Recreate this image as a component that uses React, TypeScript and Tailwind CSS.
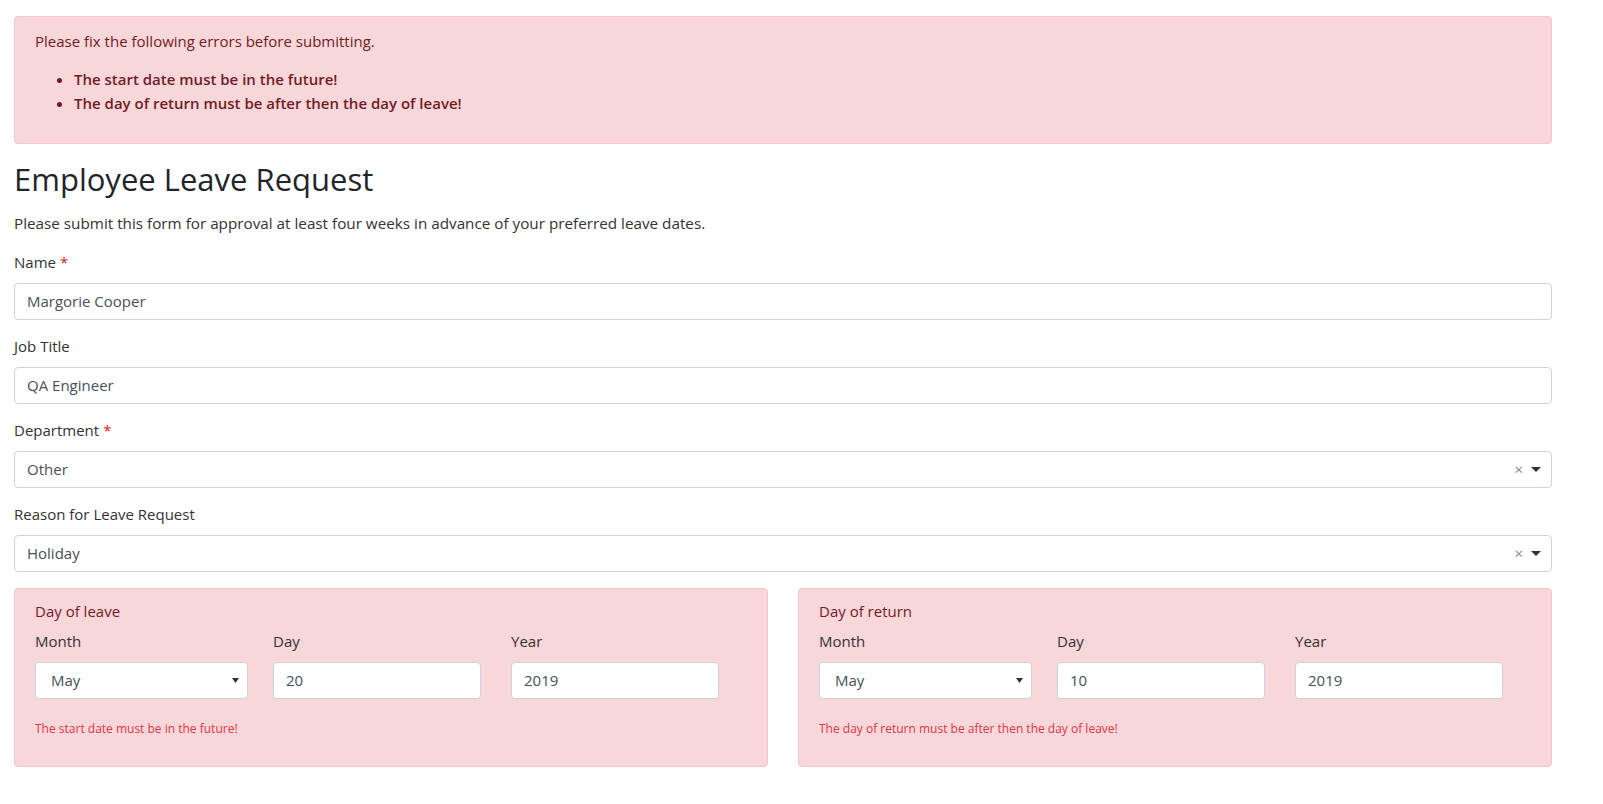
const font = { fontFamily: '"Open Sans", "Noto Sans", sans-serif' };

function Label({ text, required }: { text: string; required?: boolean }) {
  return (
    <div className="text-[15px] leading-[20px] text-[#333] mb-[11px]">
      {text}
      {required && <span className="text-[#e02020] ml-[4px]">*</span>}
    </div>
  );
}

function TextInput({ value }: { value: string }) {
  return (
    <div className="h-[37px] w-full rounded-[4px] border border-[#ced4da] bg-white px-[12px] flex items-center text-[15px] text-[#495057]">
      {value}
    </div>
  );
}

function ClearSelect({ value }: { value: string }) {
  return (
    <div className="h-[37px] w-full rounded-[4px] border border-[#ced4da] bg-white pl-[12px] pr-[10px] flex items-center text-[15px] text-[#495057]">
      <span className="flex-1">{value}</span>
      <span className="text-[#888] text-[15px] mr-[8px] leading-none">×</span>
      <svg width="10" height="6" viewBox="0 0 10 6" className="mt-[1px]">
        <path d="M0 0 L10 0 L5 5 Z" fill="#333" />
      </svg>
    </div>
  );
}

function DateBox({ title, month, day, year, error }: { title: string; month: string; day: string; year: string; error: string }) {
  return (
    <div className="flex-1 h-[179px] rounded-[4px] border border-[#f5c6cb] bg-[#f8d7da] px-[20px] pt-[12px]">
      <div className="text-[15px] leading-[20px] text-[#721c24]">{title}</div>
      <div className="flex gap-[30px] mt-[10px]">
        <div className="w-[208px]">
          <Label text="Month" />
          <div className="h-[37px] w-[213px] rounded-[4px] border border-[#ced4da] bg-white pl-[15px] pr-[8px] flex items-center text-[15px] text-[#495057]">
            <span className="flex-1">{month}</span>
            <svg width="7" height="5" viewBox="0 0 7 5">
              <path d="M0 0 L7 0 L3.5 5 Z" fill="#333" />
            </svg>
          </div>
        </div>
        <div className="w-[208px]">
          <Label text="Day" />
          <TextInput value={day} />
        </div>
        <div className="w-[208px]">
          <Label text="Year" />
          <TextInput value={year} />
        </div>
      </div>
      <div className="mt-[21px] text-[12px] text-[#dc3545]">{error}</div>
    </div>
  );
}

export default function App() {
  return (
    <div className="min-h-screen bg-white pl-[14px] pt-[16px]" style={font}>
      <div className="w-[1538px]">
        <div className="h-[128px] rounded-[4px] border border-[#f5c6cb] bg-[#f8d7da] px-[20px] pt-[13px] text-[#721c24]">
          <div className="text-[15px] leading-[22px]">Please fix the following errors before submitting.</div>
          <ul className="list-disc pl-[39px] mt-[15px] text-[15px] leading-[24px] font-semibold">
            <li>The start date must be in the future!</li>
            <li>The day of return must be after then the day of leave!</li>
          </ul>
        </div>

        <h1 className="mt-[16px] text-[31px] leading-[38px] text-[#212529]">Employee Leave Request</h1>
        <p className="mt-[14px] text-[15.25px] leading-[22px] text-[#333]">
          Please submit this form for approval at least four weeks in advance of your preferred leave dates.
        </p>

        <div className="mt-[18px]">
          <Label text="Name" required />
          <TextInput value="Margorie Cooper" />
        </div>
        <div className="mt-[16px]">
          <Label text="Job Title" />
          <TextInput value="QA Engineer" />
        </div>
        <div className="mt-[16px]">
          <Label text="Department" required />
          <ClearSelect value="Other" />
        </div>
        <div className="mt-[16px]">
          <Label text="Reason for Leave Request" />
          <ClearSelect value="Holiday" />
        </div>

        <div className="flex gap-[30px] mt-[16px]">
          <DateBox title="Day of leave" month="May" day="20" year="2019" error="The start date must be in the future!" />
          <DateBox title="Day of return" month="May" day="10" year="2019" error="The day of return must be after then the day of leave!" />
        </div>
      </div>
    </div>
  );
}
